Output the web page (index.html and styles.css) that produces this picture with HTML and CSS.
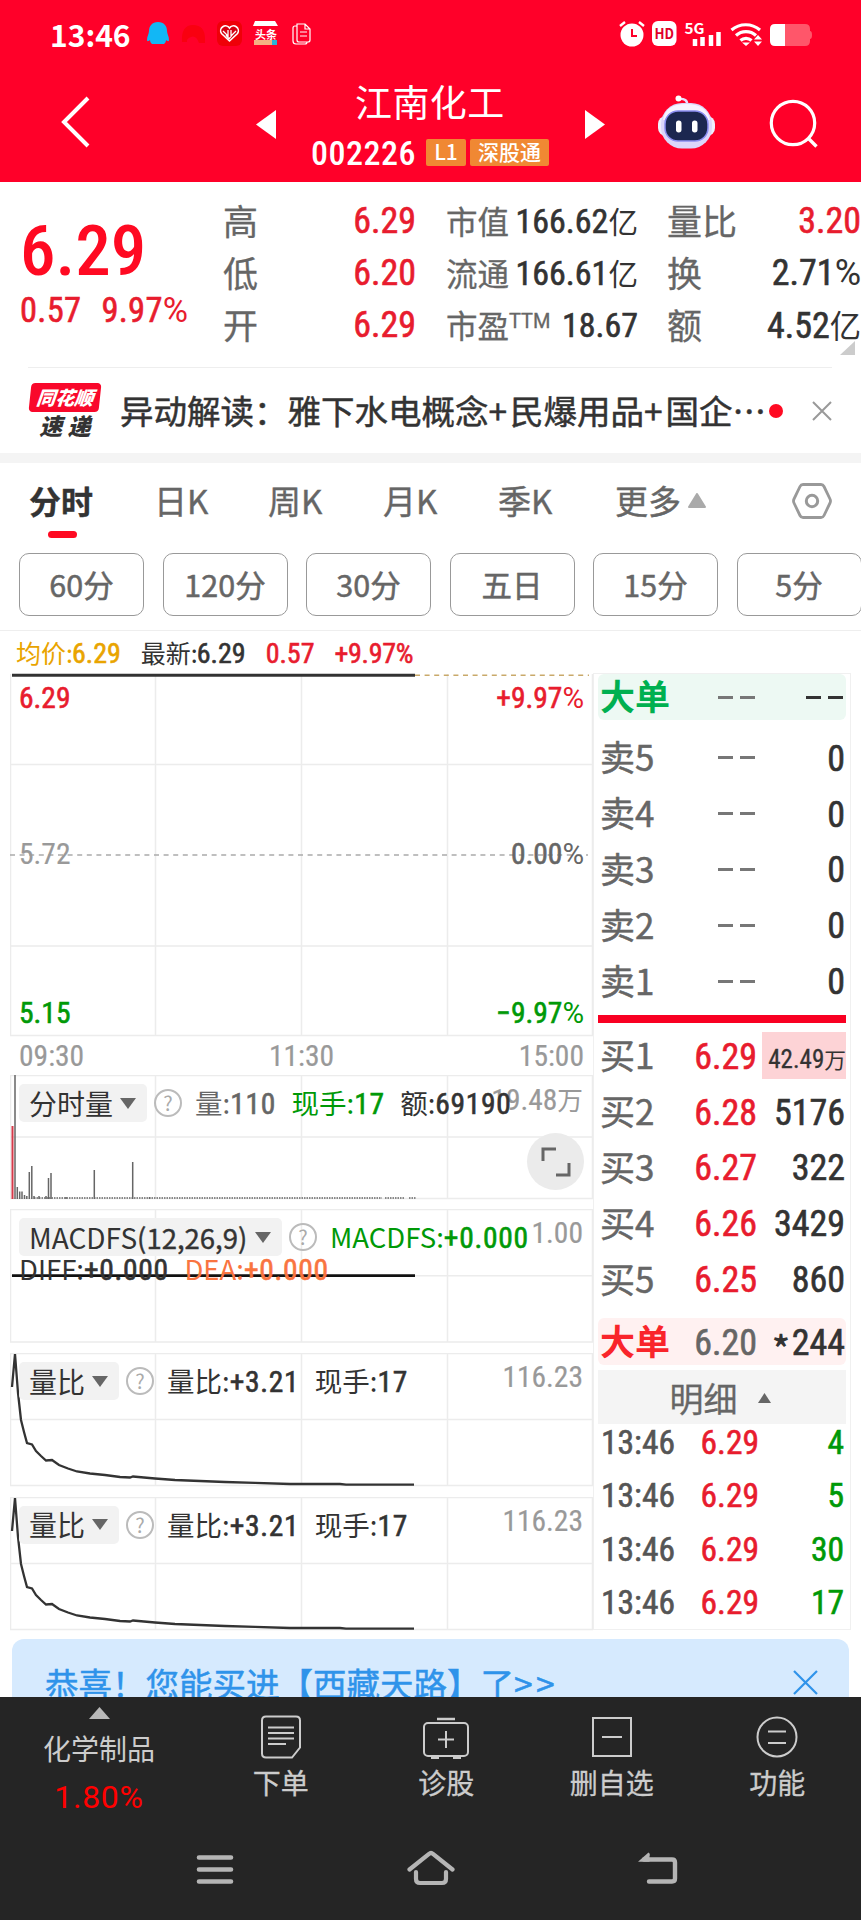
FILE: index.html
```html
<!DOCTYPE html>
<html lang="zh-CN">
<head>
<meta charset="utf-8">
<title>江南化工 002226</title>
<link rel="stylesheet" href="styles.css">
</head>
<body>
<header class="top">
  <div class="status">
    <span class="clock">13:46</span>
    <svg class="notif" viewBox="147 18 166 32" width="166" height="32">
      <path fill="#12b7f5" d="M158 22c6 0 9 4 9 9 0 3 2 5 2 9 0 2-2 1-3 0 0 2-1 3-2 4h-12c-1-1-2-2-2-4-1 1-3 2-3 0 0-4 2-6 2-9 0-5 3-9 9-9z"/>
      <path d="M182 42q-1-17 11-17t12 14v4h-6q-3-8-8-6t-4 5z" fill="#f90010"/>
      <rect x="217" y="21" width="25" height="25" rx="6" fill="#ef0008"/>
      <path d="M229.500 41l-8-7.500a4.500 4.500 0 0 1 8-5.500a4.500 4.500 0 0 1 8 5.500z" fill="#d50012" stroke="#fff" stroke-width="1.600"/><path d="M223 31l5 5v-6M236 31l-5 5v-6M226 35l3 4 3-4" fill="none" stroke="#fff" stroke-width="1.300"/>
      <path d="M255 21h20l3 5h-25z" fill="#fff"/><path d="M254 40h23v5h-23z" fill="#f4b183"/><path d="M272 40h5v5h-5z" fill="#2ab4d8"/>
      <text x="255" y="38.500" font-size="11" font-weight="700" fill="#fff">头条</text>
      <path d="M297 24h8l5 5v11q0 2-2 2h-9q-2 0-2-2zM305 24v5h5M297 26h-2q-2 0-2 2v13q0 3 3 3h9q2 0 2-2M300 32h7M300 36h7" fill="none" stroke="#fff" stroke-width="1.200"/>
    </svg>
    <svg class="sys" viewBox="619 18 196 32" width="196" height="32">
      <circle cx="633" cy="35" r="11.500" fill="#fff"/><path d="M621 26l5-4M640 22l5 4" stroke="#fff" stroke-width="2.400"/><path d="M633 29v7h5" fill="none" stroke="#ff0029" stroke-width="2"/>
      <rect x="653" y="21" width="24.500" height="25" rx="6" fill="#fff"/><text x="655.500" y="38.500" font-size="14" font-weight="700" fill="#e00028" textLength="19.500" lengthAdjust="spacingAndGlyphs">HD</text>
      <text x="685.500" y="33.500" font-size="14" font-weight="700" fill="#fff" textLength="20" lengthAdjust="spacingAndGlyphs">5G</text>
      <path d="M696 39v7M703.500 37v9M712 35v11M719.500 32v14" stroke="#fff" stroke-width="4.500"/>
      <path d="M732.500 30a22 22 0 0 1 28.500 0M737 35.500a15 15 0 0 1 20 0M741.500 40.500a8 8 0 0 1 11 0" fill="none" stroke="#fff" stroke-width="3.200"/><path d="M743 42.500h8l-4 3.500zM755 39.500l4-4.500 4 4.500zM755 41.500h8l-4 4.500z" fill="#fff"/>
      <path d="M786 24h20q5 0 5 5v2q2 0 2 4t-2 4v2q0 5-5 5h-20z" fill="#ff566a"/><path d="M786 24h-10q-5 0-5 5v12q0 5 5 5h10z" fill="#fff"/>
    </svg>
  </div>
  <nav class="nav">
    <svg class="back" width="32" height="54" viewBox="60 95 32 54"><path d="M88 98L64 122l24 24" fill="none" stroke="#fff" stroke-width="4"/></svg>
    <svg class="prev" width="20" height="29" viewBox="0 0 20 29"><path d="M20 0v29L0 14.500z" fill="#fff"/></svg>
    <div class="stock">
      <h1>江南化工</h1>
      <div class="code"><span class="num">002226</span><b class="tag l1">L1</b><b class="tag">深股通</b></div>
    </div>
    <svg class="next" width="20" height="29" viewBox="0 0 20 29"><path d="M0 0v29l20-14.500z" fill="#fff"/></svg>
    <svg class="bot" width="60" height="54" viewBox="657 95 60 54">
      <path d="M678 99q10-1 9 6" fill="none" stroke="#e9dcff" stroke-width="2.500"/><circle cx="678.500" cy="98.500" r="3" fill="#fff"/>
      <rect x="658" y="116" width="57" height="20" rx="8" fill="#f0eefc"/><rect x="661" y="103" width="51" height="45.500" rx="21" fill="#dcd6fa"/><path d="M663 120q2-16 23-16t24 16z" fill="#f7f3ff"/>
      <rect x="665" y="111" width="43" height="30" rx="13" fill="#1c2750" stroke="#8a8df0" stroke-width="1.500"/>
      <rect x="676" y="120.500" width="5.500" height="12" rx="2.700" fill="#fff"/><rect x="692" y="120.500" width="5.500" height="12" rx="2.700" fill="#fff"/>
    </svg>
    <svg class="search" width="50" height="50" viewBox="769 99 50 50"><circle cx="793" cy="123" r="21.700" fill="none" stroke="#fff" stroke-width="3.200"/><path d="M808 138l8.500 8.500" stroke="#fff" stroke-width="3.400"/></svg>
  </nav>
</header>

<section class="quote">
  <div class="last"><div class="num price">6.29</div><div class="num chg"><span>0.57</span><span>9.97<i class="pct">%</i></span></div></div>
  <dl class="stat a"><div><dt>高</dt><dd class="num red">6.29</dd></div><div><dt>低</dt><dd class="num red">6.20</dd></div><div><dt>开</dt><dd class="num red">6.29</dd></div></dl>
  <dl class="stat b"><div><dt>市值</dt><dd class="num">166.62<i>亿</i></dd></div><div><dt>流通</dt><dd class="num">166.61<i>亿</i></dd></div><div><dt>市盈<sup>TTM</sup></dt><dd class="num">18.67</dd></div></dl>
  <dl class="stat c"><div><dt>量比</dt><dd class="num red">3.20</dd></div><div><dt>换</dt><dd class="num">2.71<i class="pct">%</i></dd></div><div><dt>额</dt><dd class="num">4.52<i>亿</i></dd></div></dl>
  <svg class="corner" width="15" height="14" viewBox="0 0 15 14"><path d="M15 0v14H0z" fill="#ccc"/></svg>
</section>

<section class="news">
  <div class="brand"><b class="b1">同花顺</b><b class="b2">速 递</b></div>
  <p>异动解读：雅下水电概念<s>+</s>民爆用品<s>+</s>国企…</p>
  <span class="dot"></span>
  <svg class="x" width="20" height="20" viewBox="0 0 20 20"><path d="M1 1l18 18M19 1L1 19" stroke="#999" stroke-width="2"/></svg>
</section>

<nav class="tabs">
  <span class="on">分时</span><span>日K</span><span>周K</span><span>月K</span><span>季K</span><span>更多</span>
  <svg class="more" width="18" height="15" viewBox="0 0 18 15"><path d="M9 1l8 13H1z" fill="#aaa" stroke="#aaa" stroke-width="2" stroke-linejoin="round"/></svg>
  <svg class="hex" width="40" height="38" viewBox="0 0 40 38"><path d="M11 2.500h18q2 0 3 2l6 12.500q1 2 0 4l-6 12.500q-1 2-3 2H11q-2 0-3-2L2 21q-1-2 0-4L8 4.500q1-2 3-2z" fill="none" stroke="#999" stroke-width="2.800"/><circle cx="20" cy="19" r="5.700" fill="none" stroke="#999" stroke-width="3"/></svg>
</nav>
<div class="chips"><span>60分</span><span>120分</span><span>30分</span><span>五日</span><span>15分</span><span>5分</span></div>

<main class="main">
  <div class="legend"><span class="gold">均价:<em class="num">6.29</em></span><span>最新:<em class="num">6.29</em></span><em class="num red">0.57</em><em class="num red">+9.97%</em></div>
  <div class="left">
    <div class="panel p-price">
      <svg viewBox="10 673 584 364" width="584" height="364">
        <path class="grid" d="M10.500 674V1035.500M155.500 674V1035.500M301.500 674V1035.500M447.500 674V1035.500M592.500 674V1035.500M10 764.500H593M10 946H593M10 1035.500H593"/>
        <path d="M415 675.300H589" stroke="#c9a96a" stroke-width="1.500" stroke-dasharray="5 4.600"/>
        <path d="M10 855H588" stroke="#aaa" stroke-width="1.500" stroke-dasharray="5 4.600"/>
        <path d="M12 675.300H415" stroke="#333" stroke-width="3"/>
      </svg>
      <div class="axis"><span class="num red">6.29</span><span class="num red">+9.97<i class="pct">%</i></span></div>
      <div class="axis zero"><span class="num gray">5.72</span><span class="num mid">0.00<i class="pct">%</i></span></div>
      <div class="axis"><span class="num green">5.15</span><span class="num green">−9.97<i class="pct">%</i></span></div>
    </div>
    <div class="times num"><span>09:30</span><span>11:30</span><span>15:00</span></div>
    <div class="panel p-vol">
      <svg viewBox="10 1075 584 125" width="584" height="125">
        <path class="grid" d="M10.500 1075V1199M155.500 1075V1199M301.500 1075V1199M447.500 1075V1199M592.500 1075V1199M10 1075.500H593M10 1137H593M10 1198.500H593"/>
        <path d="M12.500 1126V1199" stroke="#d63a4a" stroke-width="2"/>
        <path d="M15 1075V1199M17.300 1187V1199M19.700 1191.500V1199M22 1191.500V1199M24.500 1195V1199M26.800 1196V1199M29.300 1172V1199M31.800 1166V1199M34 1196V1199M39 1196V1199M46 1196V1199M48.500 1178V1199M51 1173V1199M66 1197V1199M94.300 1170V1199M132.700 1162V1199M149.500 1197V1199" stroke="#666" stroke-width="1.500"/>
        <path d="M34 1198H382M385 1198H405M409 1198H416" stroke="#666" stroke-width="1.300" stroke-dasharray="1.500 1"/>
      </svg>
      <span class="num gray max">19.48<i>万</i></span>
      <div class="ind"><b class="sel">分时量<u></u></b><q>?</q><span class="mid w1">量:<em class="num">110</em></span><span class="green w2">现手:<em class="num">17</em></span><span>额:<em class="num">69190</em></span></div>
      <div class="full"><svg width="30" height="30" viewBox="0 0 30 30"><path d="M2 14V2h13M28 16v12H15" fill="none" stroke="#666" stroke-width="3"/></svg></div>
    </div>
    <div class="panel p-macd">
      <svg viewBox="10 1209 584 134" width="584" height="134">
        <path class="grid" d="M10.500 1209V1342M155.500 1209V1342M301.500 1209V1342M447.500 1209V1342M592.500 1209V1342M10 1209.500H593M10 1275.700H593M10 1342H593"/>
        <path d="M12 1275.700H415" stroke="#111" stroke-width="2.700"/>
      </svg>
      <span class="num gray max">1.00</span>
      <div class="ind"><b class="sel wide">MACDFS<em>(12,26,9)</em><u></u></b><q>?</q><span class="green">MACDFS:<em class="num">+0.000</em></span></div>
      <div class="ind sub"><span>DIFF:<em class="num">+0.000</em></span><span class="orange">DEA:<em class="num">+0.000</em></span></div>
    </div>
    <div class="panel p-lb">
      <svg viewBox="10 1353 584 134" width="584" height="134">
        <path class="grid" d="M10.500 1353V1486M155.500 1353V1486M301.500 1353V1486M447.500 1353V1486M592.500 1353V1486M10 1353.500H593M10 1419.500H593M10 1485.500H593"/>
        <path class="curve" d="M12 1387L15 1354 18 1393 21 1420 24 1432 27 1443 32 1444.500 36 1451 41 1456 46 1460.500 52 1460 59 1465 68 1468.500 77 1471.500 90 1473.500 105 1475 120 1477 130 1477.500 133 1476.500 155 1478.500 175 1480 200 1481 225 1482 255 1482.800 290 1484 340 1484 346 1484.700 414 1484.700"/>
      </svg>
      <span class="num gray max">116.23</span>
      <div class="ind"><b class="sel">量比<u></u></b><q>?</q><span class="lb">量比:<em class="num">+3.21</em></span><span>现手:<em class="num">17</em></span></div>
    </div>
    <div class="panel p-lb last-lb">
      <svg viewBox="10 1353 584 134" width="584" height="134">
        <path class="grid" d="M10.500 1353V1486M155.500 1353V1486M301.500 1353V1486M447.500 1353V1486M592.500 1353V1486M10 1353.500H593M10 1419.500H593M10 1485.500H593"/>
        <path class="curve" d="M12 1387L15 1354 18 1393 21 1420 24 1432 27 1443 32 1444.500 36 1451 41 1456 46 1460.500 52 1460 59 1465 68 1468.500 77 1471.500 90 1473.500 105 1475 120 1477 130 1477.500 133 1476.500 155 1478.500 175 1480 200 1481 225 1482 255 1482.800 290 1484 340 1484 346 1484.700 414 1484.700"/>
      </svg>
      <span class="num gray max">116.23</span>
      <div class="ind"><b class="sel">量比<u></u></b><q>?</q><span class="lb">量比:<em class="num">+3.21</em></span><span>现手:<em class="num">17</em></span></div>
    </div>
  </div>
  <aside class="book">
    <div class="row big sell"><b>大单</b><span class="dash"></span><span class="dash dk"></span></div>
    <div class="rows">
      <div class="row"><b>卖5</b><span class="dash"></span><span class="num">0</span></div>
      <div class="row"><b>卖4</b><span class="dash"></span><span class="num">0</span></div>
      <div class="row"><b>卖3</b><span class="dash"></span><span class="num">0</span></div>
      <div class="row"><b>卖2</b><span class="dash"></span><span class="num">0</span></div>
      <div class="row"><b>卖1</b><span class="dash"></span><span class="num">0</span></div>
    </div>
    <div class="bar"></div>
    <div class="rows">
      <div class="row"><b>买1</b><span class="num red">6.29</span><span class="num hot">42.49<i>万</i></span></div>
      <div class="row"><b>买2</b><span class="num red">6.28</span><span class="num">5176</span></div>
      <div class="row"><b>买3</b><span class="num red">6.27</span><span class="num">322</span></div>
      <div class="row"><b>买4</b><span class="num red">6.26</span><span class="num">3429</span></div>
      <div class="row"><b>买5</b><span class="num red">6.25</span><span class="num">860</span></div>
    </div>
    <div class="row big buy"><b>大单</b><span class="num mid">6.20</span><span class="num"><i class="star">*</i>244</span></div>
    <div class="detail">明细<svg width="13" height="10" viewBox="0 0 13 10"><path d="M6.500 0L13 10H0z" fill="#666"/></svg></div>
    <div class="ticks num">
      <div><span>13:46</span><span class="red">6.29</span><span class="green">4</span></div>
      <div><span>13:46</span><span class="red">6.29</span><span class="green">5</span></div>
      <div><span>13:46</span><span class="red">6.29</span><span class="green">30</span></div>
      <div><span>13:46</span><span class="red">6.29</span><span class="green">17</span></div>
    </div>
  </aside>
</main>

<div class="promo"><span>恭喜！您能买进【西藏天路】了<em>&gt;&gt;</em></span><svg width="25" height="25" viewBox="0 0 25 25"><path d="M1 1l23 23M24 1L1 24" stroke="#2f93ea" stroke-width="2.200"/></svg></div>

<footer class="foot">
  <div class="tools">
    <div class="sector"><svg width="21" height="12" viewBox="0 0 21 12"><path d="M10.500 0L21 12H0z" fill="#b8b8b8"/></svg><span>化学制品</span><strong>1.80%</strong></div>
    <div class="tool"><svg width="48" height="46" viewBox="0 0 48 46"><path d="M9 2h30q4 0 4 4v27l-8 10H9q-4 0-4-4V6q0-4 4-4z M11 13h26M11 18.500h26M11 24h26M11 29.500h18" transform="translate(0,.5)" fill="none" stroke="#ccc" stroke-width="2"/></svg><span>下单</span></div>
    <div class="tool"><svg width="48" height="46" viewBox="0 0 48 46"><path d="M15 5h18" stroke="#ccc" stroke-width="2.500"/><rect x="2" y="9" width="44" height="33" rx="4" fill="none" stroke="#ccc" stroke-width="2"/><path d="M24 17v17M16 25.500h16" stroke="#ccc" stroke-width="2"/><path d="M9 43.500h8M31 43.500h8" stroke="#ccc" stroke-width="3"/></svg><span>诊股</span></div>
    <div class="tool"><svg width="48" height="46" viewBox="0 0 48 46"><rect x="5" y="4" width="38" height="38" fill="none" stroke="#ccc" stroke-width="2"/><path d="M14 23h20" stroke="#ccc" stroke-width="2"/></svg><span>删自选</span></div>
    <div class="tool"><svg width="48" height="46" viewBox="0 0 48 46"><circle cx="24" cy="23" r="19.500" fill="none" stroke="#ccc" stroke-width="2"/><path d="M15 17.500h18M15 29h18" stroke="#ccc" stroke-width="2"/></svg><span>功能</span></div>
  </div>
  <div class="sysnav">
    <svg width="48" height="38" viewBox="0 0 48 38"><path d="M8 7.500h32M8 19.500h32M8 31.500h32" stroke="#b5b5b5" stroke-width="4.600" stroke-linecap="round"/></svg>
    <svg width="48" height="38" viewBox="0 0 48 38"><path d="M2.500 19.500L22 4q2-2 4 0l19.500 15.500M9 22v7q0 4 4 4h22q4 0 4-4v-7" fill="none" stroke="#b5b5b5" stroke-width="4.200" stroke-linecap="round"/></svg>
    <svg width="48" height="38" viewBox="0 0 48 38"><path d="M10 9.500h28q3 0 3 3v16q0 3-3 3H15" fill="none" stroke="#b5b5b5" stroke-width="4.400" stroke-linecap="round"/><path d="M4 11.700L14.500 2.500q2 1 1 4v5.200z" fill="#b5b5b5"/></svg>
  </div>
</footer>
</body>
</html>
```
FILE: styles.css
```css
* { box-sizing: border-box; }
body { margin: 0; width: 861px; height: 1920px; overflow: hidden; background: #fff; color: #333; font-family: "Noto Sans CJK SC", sans-serif; font-size: 34px; }
h1, p, dl, dd, dt { margin: 0; font-weight: 400; }
svg { display: block; flex: none; }
em, i { font-style: normal; }
span, em, b, strong, dt, dd { white-space: nowrap; }
.num { font-family: Roboto, "Noto Sans CJK SC", sans-serif; font-stretch: 85%; font-weight: 400; -webkit-text-stroke: .6px currentColor; }
.num i { font-family: "Noto Sans CJK SC", sans-serif; font-weight: 400; letter-spacing: 0; font-size: .87em; -webkit-text-stroke: 0; }
.num i.pct { font-family: Roboto, sans-serif; font-stretch: 100%; font-size: 1em; }
.num i.star { font-size: .95em; line-height: 0; vertical-align: -6px; margin-right: 2px; font-weight: 700; }
.red { color: #e81c2e; }
.green { color: #009907; }
.gray { color: #999; }
.num.gray { -webkit-text-stroke: .2px currentColor; }
.mid { color: #666; }
.gold { color: #e9a400; }
.orange { color: #f97440; }

.top { height: 182px; background: #ff0029; color: #fff; }
.status { height: 64px; padding: 3px 47px 0 50px; display: flex; align-items: center; }
.clock { font-size: 30px; font-weight: 700; width: 97px; }
.sys { margin-left: auto; }
.nav { height: 118px; display: grid; grid-template-columns: 60px 196px 57px 273px 71px 112px 92px; }
.back { grid-column: 2; margin-top: 31px; }
.prev { grid-column: 3; margin-top: 46px; }
.next { grid-column: 5; margin: 46px 0 0 -1px; }
.bot { grid-column: 6; margin-top: 31px; }
.search { grid-column: 7; margin-top: 35px; }
.stock { grid-column: 4; padding-top: 12px; }
.stock h1 { font-size: 37px; line-height: 50px; padding-left: 42px; letter-spacing: .4px; }
.code { display: flex; align-items: center; height: 52px; font-size: 34px; line-height: 40px; }
.code .num { width: 113px; padding-top: 2px; margin-left: -2px; margin-right: 2px; font-weight: 500; letter-spacing: .5px; -webkit-text-stroke: 0; }
.tag { height: 27px; width: 79px; margin-left: 4px; margin-top: 1px; background: #f08833; border-radius: 2px; font-size: 21px; line-height: 25px; text-align: center; font-weight: 500; }
.l1 { width: 40px; margin-left: 0; }

.quote { height: 186px; position: relative; display: grid; grid-template-columns: 223px 193px 30px 192px 29px 194px; }
.quote::after { content: ""; position: absolute; left: 28px; right: 29px; bottom: 0; height: 1px; background: #eee; }
.last { padding: 32px 0 0 20px; color: #ff0a22; }
.price { font-size: 71px; line-height: 74px; font-weight: 500; -webkit-text-stroke: 0; }
.chg { font-size: 34.500px; line-height: 44px; display: flex; gap: 20px; color: #e81c2e; letter-spacing: .3px; }
.stat { padding-top: 12px; }
.stat.b { grid-column: 4; }
.stat.c { grid-column: 6; }
.stat div { display: flex; justify-content: space-between; align-items: center; height: 52px; line-height: 52px; }
.stat dt { color: #666; font-size: 35px; margin-top: -1px; -webkit-text-stroke: .3px currentColor; }
.stat.b dt { font-size: 31.500px; }
.stat dd { font-size: 36px; padding-top: 2px; }
.stat.b dd { font-size: 34px; }
.stat sup { font-size: 20px; vertical-align: 10px; line-height: 0; font-family: Roboto, sans-serif; }
.corner { position: absolute; left: 840px; top: 159px; }

.news { height: 85px; display: flex; align-items: center; padding: 0 29px 0 30px; }
.brand { width: 70px; margin-right: 20px; font-style: italic; text-align: center; line-height: 1; }
.brand b { display: block; font-weight: 900; }
.b1 { height: 29px; line-height: 28px; font-size: 19px; color: #fff; background: #f9082b; border-radius: 4px; transform: skewX(-6deg); }
.b2 { font-size: 23px; height: 27px; line-height: 26px; }
.news p { font-size: 33.500px; width: 650px; white-space: nowrap; line-height: 48px; margin-top: -2px; -webkit-text-stroke: .5px currentColor; }
.news s { text-decoration: none; letter-spacing: 3px; }
.dot { width: 14px; height: 14px; border-radius: 50%; background: #ff0a22; }
.x { margin-left: 29px; }

.tabs { border-top: 10px solid #f4f4f4; height: 97px; display: grid; grid-template-columns: 29px 125px 114px 115px 115px 117px 72px 105px 69px; color: #666; font-size: 33px; line-height: 74px; }
.tabs .on { grid-column: 2; color: #333; font-weight: 700; font-size: 32px; position: relative; }
.on::after { content: ""; position: absolute; left: 19px; top: 68px; width: 29px; height: 7px; border-radius: 4px; background: #ff0a22; }
.tabs span { -webkit-text-stroke: .4px currentColor; }
.more { margin: 30px 0 0 1px; }
.hex { margin-top: 19px; }
.chips { height: 81px; padding: 3px 0 0 19px; display: flex; gap: 18.500px; border-bottom: 1px solid #eee; }
.chips span { flex: none; width: 125px; height: 63px; border: 1px solid #999; border-radius: 10px; text-align: center; color: #666; font-size: 30.500px; line-height: 60px; -webkit-text-stroke: .5px currentColor; }

.main { display: grid; grid-template-columns: 10px 583px 258px 10px; grid-template-rows: 42px 957px; }
.legend { grid-column: 1 / -1; padding-left: 16px; display: flex; gap: 20px; font-size: 25px; line-height: 43px; }
.legend em { font-size: 28px; }
.legend > em { padding-top: 1px; }
.legend > em:last-child { letter-spacing: -.3px; }
.legend span em { margin-left: -1px; }
.left { grid-column: 2; }
.panel { position: relative; }
.panel > svg { position: absolute; left: 0; top: 0; }
.grid { fill: none; stroke: #ececec; stroke-width: 1.500; }
.curve { fill: none; stroke: #333; stroke-width: 2.300; }
.p-price { height: 363px; font-size: 29.500px; display: flex; flex-direction: column; justify-content: space-between; padding: 5px 9px 3px 9px; }
.axis { position: relative; display: flex; justify-content: space-between; line-height: 40px; }
.zero { top: -2px; }
.times { display: flex; justify-content: space-between; height: 39px; padding: 0 9px; font-size: 29.500px; line-height: 40px; color: #999; -webkit-text-stroke: .2px currentColor; }
.p-vol { height: 134px; }
.p-macd { height: 144px; }
.p-lb { height: 143.500px; }
.max { position: absolute; right: 10px; top: 4px; font-size: 29.500px; line-height: 40px; }
.ind { position: relative; display: flex; align-items: center; padding: 9px 0 0 9px; font-size: 27.500px; height: 47px; line-height: 38px; }
.ind em.num { font-size: 29.500px; letter-spacing: .7px; }
.ind > span { margin-right: 15.500px; }
.sel { height: 38px; line-height: 35px; padding: 0 11px 0 10px; border-radius: 5px; background: #f2f2f2; font-weight: 400; display: flex; align-items: center; gap: 7px; font-size: 28px; }
.sel em { font-size: 27.500px; -webkit-text-stroke: .4px currentColor; }
.wide { gap: 0; width: 263px; }
.wide u { margin-left: auto; }
.sel u { border: 8px solid transparent; border-top: 11px solid #666; border-bottom: 0; }
q { quotes: none; width: 28px; height: 28px; border: 2px solid #bbb; border-radius: 50%; text-align: center; line-height: 23px; font-size: 20px; color: #aaa; margin: 0 13px 0 7px; }
.sub { height: 34px; padding-top: 0; margin-top: -4px; padding-left: 9px; }
.full { position: absolute; left: 517px; top: 58px; width: 57px; height: 57px; border-radius: 50%; background: #ebebeb; display: grid; place-items: center; }

.book { border: 1px solid #f0f0f0; padding: 0 4px; font-size: 36px; }
.row { height: 55.800px; display: grid; grid-template-columns: 2px 92px 65px 1fr 1px; align-items: center; justify-items: end; line-height: 50px; }
.row b { grid-column: 2; justify-self: start; font-weight: 400; color: #666; font-size: 35px; margin-top: -3px; -webkit-text-stroke: .5px currentColor; }
.row > .num { margin-top: 2px; }
.big { height: 46px; border-radius: 6px; }
.row.big b { font-weight: 700; margin-top: -5px; -webkit-text-stroke: 0; }
.row.big > .num { margin-top: 0; }
.sell { background: #edf9f3; margin-bottom: 10px; }
.row.sell b { color: #00b050; }
.buy { background: #fff1f1; margin: 11px 0 5px; height: 47px; }
.row.buy b { color: #f9252b; }
.dash { width: 37px; height: 3px; margin-right: 2px; background: linear-gradient(90deg, #777 15px, transparent 15px, transparent 22px, #777 22px); }
.dk { background: linear-gradient(90deg, #333 15px, transparent 15px, transparent 22px, #333 22px); }
.bar { height: 8px; margin: 6px 0 5px; background: #f90022; }
.row .hot { background: #fdd3d6; width: 84px; height: 47px; margin-right: -1px; margin-top: 0; font-size: 25px; line-height: 54px; text-align: right; -webkit-text-stroke: .3px currentColor; }
.detail { height: 54px; background: #f4f4f4; color: #666; display: flex; align-items: center; justify-content: center; gap: 20px; font-size: 34px; line-height: 50px; padding: 2px 4px 0 0; -webkit-text-stroke: .3px currentColor; }
.ticks { margin-top: -8px; font-size: 33.500px; }
.ticks div { height: 53.300px; line-height: 54px; display: grid; grid-template-columns: 3px 82px 76px 1fr 2px; justify-items: end; color: #555; }
.ticks span:first-child { grid-column: 2; justify-self: start; }

.promo { margin: 9px 12px 0; height: 58px; border-radius: 12px 12px 0 0; background: #d6eafe; color: #2f93ea; display: flex; justify-content: space-between; padding: 0 31px 0 33px; font-size: 33.500px; overflow: hidden; line-height: 87px; -webkit-text-stroke: .5px currentColor; }
.promo em { letter-spacing: 3.500px; }
.promo svg { margin-top: 31px; }
.foot { position: relative; height: 223px; background: #252525; color: #ccc; }
.tools { display: grid; grid-template-columns: 198px repeat(4, 165.500px); height: 130px; }
.sector { display: flex; flex-direction: column; align-items: center; padding-top: 10px; font-size: 28px; line-height: 48px; }
.sector span { margin-top: 5px; }
.sector strong { font: 400 32px/50px Roboto, sans-serif; letter-spacing: .7px; color: #f00; }
.tool { display: flex; flex-direction: column; align-items: center; padding-top: 17px; font-size: 28px; line-height: 45px; -webkit-text-stroke: .3px currentColor; }
.sysnav { display: grid; grid-template-columns: 216px 215px 239px; justify-items: center; padding: 23px 0 0 107px; }
```
